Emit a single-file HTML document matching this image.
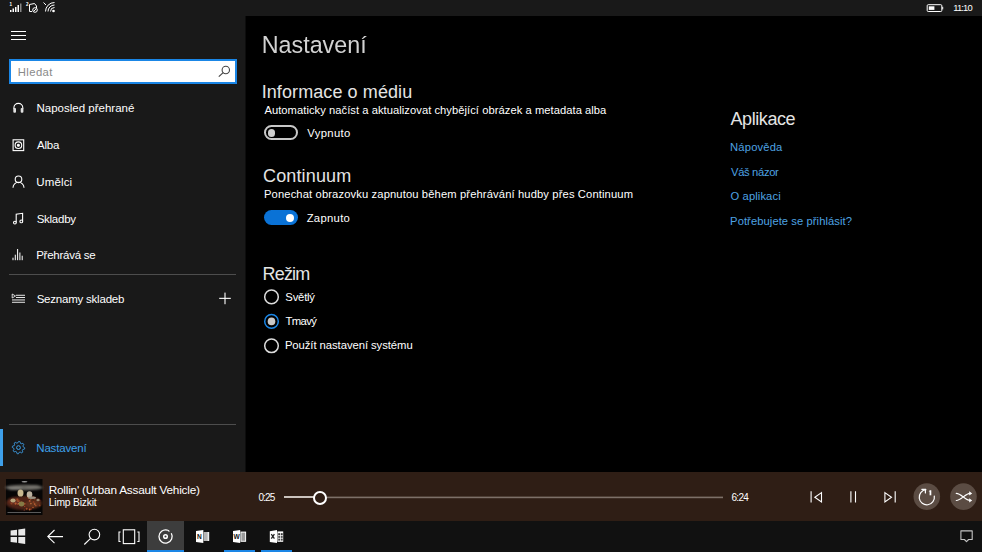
<!DOCTYPE html>
<html><head><meta charset="utf-8">
<style>
html,body{margin:0;padding:0;}
body{width:982px;height:552px;overflow:hidden;position:relative;background:#000;font-family:"Liberation Sans",sans-serif;}
.t{position:absolute;white-space:nowrap;line-height:1;}
.abs{position:absolute;}
svg{position:absolute;overflow:visible;}
</style></head><body>
<!-- status bar -->
<div class="abs" style="left:0;top:0;width:982px;height:16px;background:#191919"></div>
<!-- sidebar -->
<div class="abs" style="left:0;top:16px;width:245px;height:456px;background:#191919"></div>
<div class="abs" style="left:245px;top:16px;width:1px;height:456px;background:#0d0d0d"></div>
<!-- player bar -->
<div class="abs" style="left:0;top:472px;width:982px;height:49px;background:#2f1e15"></div>
<!-- taskbar -->
<div class="abs" style="left:0;top:521px;width:982px;height:31px;background:#111"></div>

<!-- status icons -->
<svg style="left:0;top:0" width="982" height="16" viewBox="0 0 982 16">
  <g fill="#fff">
    <rect x="10" y="10" width="1.5" height="2"/>
    <rect x="12.5" y="8.5" width="1.5" height="3.5"/>
    <rect x="15" y="7" width="1.5" height="5"/>
    <rect x="17.5" y="5" width="1.5" height="7"/>
    <rect x="20" y="3.5" width="1.5" height="8.5" fill="#888"/>
    <text x="9.5" y="5.5" font-size="4.5" font-family="Liberation Sans" font-weight="bold">1</text>
    <text x="26" y="5.5" font-size="4.5" font-family="Liberation Sans" font-weight="bold">2</text>
  </g>
  <g fill="none" stroke="#fff" stroke-width="1">
    <path d="M29.5 4.5 L34.5 3.5 L36.5 6 L36.5 8 M29.5 4.5 V11.5 H32"/>
    <circle cx="35" cy="10" r="2.3"/>
    <path d="M33.6 11.4 L36.4 8.6"/>
    <path d="M45.5 11.5 A9 9 0 0 1 54.5 2.5" />
    <path d="M48 11.5 A6.5 6.5 0 0 1 54.5 5" />
    <path d="M50.5 11.5 A4 4 0 0 1 54.5 7.5" />
  </g>
  <circle cx="53.5" cy="11" r="1.3" fill="#fff"/>
  <path d="M43.5 2.5 L46 5" stroke="#fff" stroke-width="1"/>
  <!-- battery -->
  <rect x="927.2" y="4.7" width="14.6" height="6.8" rx="1" fill="none" stroke="#fff" stroke-width="1"/>
  <rect x="942.2" y="6.8" width="1" height="2.6" fill="#fff"/>
  <rect x="928.8" y="6.3" width="5.6" height="3.6" fill="#fff"/>
</svg>

<!-- hamburger -->
<div class="abs" style="left:11px;top:30.6px;width:15px;height:1.2px;background:#fff"></div>
<div class="abs" style="left:11px;top:34.8px;width:15px;height:1.2px;background:#fff"></div>
<div class="abs" style="left:11px;top:39px;width:15px;height:1.2px;background:#fff"></div>

<!-- search box -->
<div class="abs" style="left:9px;top:59px;width:224px;height:21px;border:2px solid #1a86e6;background:#fff"></div>
<svg style="left:0;top:0" width="245" height="100">
  <circle cx="225.8" cy="70" r="3.7" fill="none" stroke="#444" stroke-width="1.1"/>
  <path d="M218.8 76.6 L223.2 72.6" stroke="#444" stroke-width="1.2"/>
</svg>

<!-- nav icons -->
<svg style="left:0;top:0" width="245" height="472">
  <g fill="none" stroke="#fff" stroke-width="1.1">
    <!-- headphones -->
    <path d="M13.9 109 V107.8 A4.45 4.45 0 0 1 22.8 107.8 V109"/>
    <rect x="13.3" y="107.9" width="2.7" height="4.9" rx="1" fill="#e0e0e0" stroke="none"/>
    <rect x="20.7" y="107.9" width="2.7" height="4.9" rx="1" fill="#e0e0e0" stroke="none"/>
    <!-- album -->
    <rect x="13.1" y="139.8" width="10.6" height="10.8"/>
    <circle cx="18.4" cy="145.2" r="3.3"/>
    <circle cx="18.4" cy="145.2" r="1" fill="#fff"/>
    <!-- person -->
    <circle cx="18.5" cy="179.3" r="3.3"/>
    <path d="M13 187.8 A5.5 5.5 0 0 1 24 187.8"/>
    <!-- note -->
    <path d="M16.2 222.4 V214.3 L22.6 213.3 V221.2"/>
    <circle cx="14.9" cy="222.6" r="1.4"/>
    <circle cx="21.3" cy="221.4" r="1.4"/>
    <!-- playlist -->
  </g>
  <g fill="#fff">
    <!-- now playing bars -->
    <rect x="12.5" y="257.7" width="1" height="2.5"/>
    <rect x="14.8" y="254.7" width="1" height="5.5"/>
    <rect x="17.1" y="249" width="1" height="11.2"/>
    <rect x="19.4" y="252.5" width="1" height="7.7"/>
    <rect x="21.7" y="255.7" width="1" height="4.5"/>
    <!-- playlist icon -->
    <path d="M12.2 294 L15.5 296 L12.2 298 Z" fill="none" stroke="#fff" stroke-width="0.8"/>
    <rect x="16" y="294.8" width="9" height="0.9"/>
    <rect x="16" y="297.1" width="9" height="0.9"/>
    <rect x="12" y="299.5" width="13" height="0.9"/>
    <rect x="12" y="301.8" width="13" height="0.9"/>
    <!-- plus -->
    <rect x="219.2" y="297.8" width="11.6" height="1.1"/>
    <rect x="224.45" y="292.6" width="1.1" height="11.6"/>
  </g>
  <!-- dividers -->
  <rect x="9" y="274" width="227" height="1" fill="#4d4d4d"/>
  <rect x="9" y="424" width="227" height="1" fill="#4d4d4d"/>
  <!-- accent -->
  <rect x="0" y="429" width="3" height="37" fill="#3ea0ea"/>
  <!-- gear -->
  <g transform="translate(18.5,447.6)" fill="none" stroke="#3ea0ea" stroke-width="1">
    <path d="M0.20 -6.20 L0.61 -6.17 L1.01 -6.12 L1.41 -6.04 L1.65 -5.44 L1.83 -4.86 L1.94 -4.28 L2.22 -4.15 L2.48 -3.99 L2.74 -3.82 L3.30 -4.02 L3.89 -4.15 L4.53 -4.24 L4.79 -3.93 L5.04 -3.61 L5.27 -3.27 L5.02 -2.68 L4.73 -2.14 L4.40 -1.66 L4.50 -1.36 L4.58 -1.07 L4.64 -0.77 L5.17 -0.51 L5.69 -0.19 L6.20 0.20 L6.17 0.61 L6.12 1.01 L6.04 1.41 L5.44 1.65 L4.86 1.83 L4.28 1.94 L4.15 2.22 L3.99 2.48 L3.82 2.74 L4.02 3.30 L4.15 3.89 L4.24 4.53 L3.93 4.79 L3.61 5.04 L3.27 5.27 L2.68 5.02 L2.14 4.73 L1.66 4.40 L1.36 4.50 L1.07 4.58 L0.77 4.64 L0.51 5.17 L0.19 5.69 L-0.20 6.20 L-0.61 6.17 L-1.01 6.12 L-1.41 6.04 L-1.65 5.44 L-1.83 4.86 L-1.94 4.28 L-2.22 4.15 L-2.48 3.99 L-2.74 3.82 L-3.30 4.02 L-3.89 4.15 L-4.53 4.24 L-4.79 3.93 L-5.04 3.61 L-5.27 3.27 L-5.02 2.68 L-4.73 2.14 L-4.40 1.66 L-4.50 1.36 L-4.58 1.07 L-4.64 0.77 L-5.17 0.51 L-5.69 0.19 L-6.20 -0.20 L-6.17 -0.61 L-6.12 -1.01 L-6.04 -1.41 L-5.44 -1.65 L-4.86 -1.83 L-4.28 -1.94 L-4.15 -2.22 L-3.99 -2.48 L-3.82 -2.74 L-4.02 -3.30 L-4.15 -3.89 L-4.24 -4.53 L-3.93 -4.79 L-3.61 -5.04 L-3.27 -5.27 L-2.68 -5.02 L-2.14 -4.73 L-1.66 -4.40 L-1.36 -4.50 L-1.07 -4.58 L-0.77 -4.64 L-0.51 -5.17 L-0.19 -5.69 Z"/>
    <circle r="1.9"/>
  </g>
</svg>

<!-- toggles -->
<div class="abs" style="left:264px;top:125px;width:30px;height:11px;border:2px solid #c8c8c8;border-radius:8px"></div>
<div class="abs" style="left:267.8px;top:129.1px;width:7.6px;height:7.6px;border-radius:50%;background:#cfcfcf"></div>
<div class="abs" style="left:264px;top:210px;width:34px;height:15px;border-radius:7.5px;background:#0a72d6"></div>
<div class="abs" style="left:286.1px;top:213.7px;width:8px;height:8px;border-radius:50%;background:#fff"></div>

<!-- radios -->
<svg style="left:0;top:0" width="400" height="400">
  <circle cx="271.5" cy="296.9" r="6.8" fill="none" stroke="#ddd" stroke-width="1.5"/>
  <circle cx="271.5" cy="321.4" r="6.8" fill="none" stroke="#1a86e6" stroke-width="1.5"/>
  <circle cx="271.5" cy="321.4" r="3.8" fill="#c8c8c8"/>
  <circle cx="271.5" cy="345.8" r="6.8" fill="none" stroke="#ddd" stroke-width="1.5"/>
</svg>

<!-- album art -->
<svg style="left:6.3px;top:478.6px" width="36.5" height="36" viewBox="0 0 36.5 36">
  <defs>
    <filter id="bl" x="-20%" y="-20%" width="140%" height="140%"><feGaussianBlur stdDeviation="0.9"/></filter>
    <filter id="bl2" x="-20%" y="-20%" width="140%" height="140%"><feGaussianBlur stdDeviation="0.45"/></filter>
  </defs>
  <rect width="36.5" height="36" fill="#070606"/>
  <g filter="url(#bl)">
    <ellipse cx="18" cy="8.5" rx="19" ry="2.8" fill="#686661"/>
    <ellipse cx="9" cy="9.2" rx="7" ry="1.8" fill="#807e78"/>
    <ellipse cx="27" cy="7.8" rx="7" ry="1.7" fill="#74726c"/>
    <ellipse cx="18" cy="24" rx="18" ry="7" fill="#4e2416"/>
    <ellipse cx="8" cy="22" rx="6" ry="3.5" fill="#6a3020"/>
    <ellipse cx="27" cy="25" rx="8" ry="3.5" fill="#62301c"/>
  </g>
  <g filter="url(#bl2)">
    <circle cx="9.6" cy="24.6" r="1.05" fill="#b85a30"/>
    <circle cx="17.2" cy="25.1" r="0.51" fill="#c06a3a"/>
    <circle cx="28.8" cy="20.6" r="0.62" fill="#8a3c20"/>
    <circle cx="24.9" cy="24.6" r="0.79" fill="#c06a3a"/>
    <circle cx="22.5" cy="19.1" r="1.02" fill="#8a3c20"/>
    <circle cx="18.7" cy="27.4" r="0.60" fill="#a04a26"/>
    <circle cx="27.0" cy="28.5" r="0.78" fill="#b85a30"/>
    <circle cx="25.0" cy="29.3" r="0.74" fill="#6a2a18"/>
    <circle cx="27.6" cy="23.2" r="1.03" fill="#8a3c20"/>
    <circle cx="16.0" cy="25.8" r="0.75" fill="#b85a30"/>
    <circle cx="28.7" cy="25.0" r="0.85" fill="#c06a3a"/>
    <circle cx="20.7" cy="29.7" r="1.01" fill="#a04a26"/>
    <circle cx="33.7" cy="26.4" r="0.92" fill="#8a3c20"/>
    <circle cx="12.4" cy="24.6" r="0.84" fill="#c06a3a"/>
    <circle cx="24.8" cy="20.0" r="0.66" fill="#c06a3a"/>
    <circle cx="6.0" cy="23.7" r="0.55" fill="#6a2a18"/>
    <circle cx="27.6" cy="22.7" r="0.51" fill="#8a3c20"/>
    <circle cx="15.7" cy="22.8" r="0.53" fill="#a04a26"/>
    <circle cx="21.7" cy="17.6" r="0.70" fill="#c06a3a"/>
    <circle cx="18.2" cy="31.0" r="0.50" fill="#b85a30"/>
    <circle cx="5.5" cy="24.5" r="1.08" fill="#8a3c20"/>
    <circle cx="11.3" cy="20.7" r="1.09" fill="#a04a26"/>
    <circle cx="12.9" cy="22.0" r="1.04" fill="#8a3c20"/>
    <circle cx="14.1" cy="23.4" r="0.73" fill="#c06a3a"/>
    <circle cx="29.7" cy="26.5" r="0.87" fill="#a04a26"/>
    <circle cx="32.1" cy="24.1" r="0.88" fill="#6a2a18"/>
    <circle cx="24.9" cy="30.1" r="1.09" fill="#6a2a18"/>
    <circle cx="18.7" cy="24.7" r="0.97" fill="#a04a26"/>
    <circle cx="33.6" cy="21.4" r="0.87" fill="#6a2a18"/>
    <circle cx="22.2" cy="17.8" r="0.78" fill="#b85a30"/>
    <circle cx="23.7" cy="21.9" r="0.94" fill="#b85a30"/>
    <circle cx="23.6" cy="30.5" r="0.88" fill="#b85a30"/>
    <circle cx="11.6" cy="25.4" r="0.72" fill="#8a3c20"/>
    <circle cx="12.0" cy="22.2" r="0.66" fill="#c06a3a"/>
    <circle cx="27.2" cy="18.5" r="1.08" fill="#a04a26"/>
    <ellipse cx="14.5" cy="14" rx="3" ry="3.6" fill="#c8b890"/>
    <ellipse cx="23.5" cy="15.5" rx="2.8" ry="3.2" fill="#bcb2a0"/>
    <ellipse cx="26" cy="18.8" rx="4" ry="1.2" fill="#9a9282"/>
    <ellipse cx="7" cy="21.5" rx="2.6" ry="2" fill="#b8a67c"/>
    <ellipse cx="15.5" cy="25" rx="2.8" ry="2.4" fill="#857a44"/>
    <ellipse cx="32" cy="21" rx="1.6" ry="1.2" fill="#9a8a70"/>
    <ellipse cx="18.5" cy="2.8" rx="3" ry="0.8" fill="#9a9a9a"/>
  </g>
  <rect x="1.5" y="33" width="33.5" height="1" fill="#5a5a5a"/>
</svg>

<!-- slider -->
<div class="abs" style="left:284px;top:496.4px;width:30px;height:2px;background:#cbc3bd"></div>
<svg style="left:0;top:0" width="982" height="552"><rect x="326" y="496.6" width="397" height="1.6" fill="#7d7068"/></svg>
<div class="abs" style="left:312.9px;top:490.5px;width:10px;height:10px;border:2px solid #fff;border-radius:50%;background:#2f1e15"></div>

<!-- player controls -->
<svg style="left:0;top:0" width="982" height="552">
  <g fill="none" stroke="#fff" stroke-width="1.1">
    <path d="M811.1 491.3 V502.4"/>
    <path d="M821.5 492.6 L814.8 497.3 L821.5 502 Z"/>
    <path d="M850.9 491.3 V502.4 M855.5 491.3 V502.4"/>
    <path d="M884.9 492.6 L891.5 497.3 L884.9 502 Z"/>
    <path d="M895.2 491.3 V502.4"/>
  </g>
  <circle cx="926.8" cy="496.6" r="13.3" fill="#5b4c43"/>
  <circle cx="963.5" cy="496.6" r="13.3" fill="#5b4c43"/>
  <g fill="none" stroke="#fff" stroke-width="1.2" stroke-linecap="round">
    <path d="M925.9 489.7 A7.6 7.6 0 1 0 934.3 496"/>
    <path d="M921.8 489.3 H925.4 V492.9"/>
    <path d="M956.3 493.4 C961 493.4 965.5 500.4 970 500.4 M956.3 500.5 C961 500.5 965.5 493.4 970 493.4"/>
  </g>
  <path d="M969.2 491.3 L972.2 493.4 L969.2 495.5 Z M969.2 498.3 L972.2 500.4 L969.2 502.5 Z" fill="#fff"/>
  <rect x="929.6" y="490.3" width="1.7" height="5" fill="#fff"/>
  <path d="M928.6 491.4 L930.2 490.2 L930.6 491.6 Z" fill="#fff"/>
</svg>

<!-- taskbar icons -->
<div class="abs" style="left:147.3px;top:521px;width:37px;height:31px;background:#3d3d3d"></div>
<div class="abs" style="left:147.3px;top:550px;width:37px;height:2px;background:#1a86e6"></div>
<div class="abs" style="left:224px;top:550px;width:31px;height:2px;background:#1a86e6"></div>
<div class="abs" style="left:261px;top:550px;width:30.5px;height:2px;background:#1a86e6"></div>
<svg style="left:0;top:0" width="982" height="552">
  <!-- windows logo -->
  <g fill="#e8e8e8">
    <path d="M10.6 530.6 L17 529.7 V535.6 H10.6 Z"/>
    <path d="M18.3 529.5 L25.2 528.6 V535.6 H18.3 Z"/>
    <path d="M10.6 536.9 H17 V542.8 L10.6 541.9 Z"/>
    <path d="M18.3 536.9 H25.2 V543.9 L18.3 543 Z"/>
  </g>
  <g fill="none" stroke="#fff" stroke-width="1.1">
    <path d="M63 536.6 H48 M54.5 530 L47.8 536.6 L54.5 543.2"/>
    <circle cx="94.4" cy="534.6" r="5.3"/>
    <path d="M90.6 538.4 L84.3 544.5"/>
    <rect x="123.3" y="529.8" width="11.4" height="13.8"/>
    <path d="M120.6 532 H119 V541.5 H120.6 M137.4 532 H139 V541.5 H137.4"/>
    <path d="M171.3 533.2 A6.6 6.6 0 1 1 167.3 530.1" stroke-width="1.3"/>
    <path d="M167.3 530.1 Q169 530.6 169.3 531.6" stroke-width="1.1"/>
    <circle cx="165.5" cy="536.5" r="1.8" stroke-width="1.5"/>
  </g>
  <!-- office icons -->
  <g>
    <rect x="203.6" y="532" width="5.4" height="9" fill="#b5b5b5"/>
    <path d="M207.6 532 H209.2 V541 H207.6 Z" fill="#eee"/>
    <path d="M196 531.1 L203.3 530 V543 L196 541.9 Z" fill="#fff"/>
    <text x="197" y="538.9" font-size="6.6" font-weight="bold" font-family="Liberation Sans" fill="#111">N</text>

    <rect x="240.5" y="531.6" width="5.6" height="10.2" fill="#fff"/>
    <rect x="241.4" y="532.6" width="3.8" height="8.2" fill="#9a9a9a"/>
    <path d="M233 531.1 L240.2 530 V543 L233 541.9 Z" fill="#fff"/>
    <text x="233.5" y="539" font-size="6.6" font-weight="bold" font-family="Liberation Sans" fill="#111">W</text>

    <rect x="277.4" y="531.4" width="5.8" height="10.4" fill="#fff"/>
    <rect x="278.2" y="533.2" width="1.9" height="2" fill="#333"/><rect x="280.8" y="533.2" width="1.9" height="2" fill="#333"/>
    <rect x="278.2" y="535.9" width="1.9" height="2" fill="#555"/><rect x="280.8" y="535.9" width="1.9" height="2" fill="#555"/>
    <rect x="278.2" y="538.6" width="1.9" height="2" fill="#444"/><rect x="280.8" y="538.6" width="1.9" height="2" fill="#444"/>
    <path d="M269.8 531.2 L277 530 V543 L269.8 541.9 Z" fill="#fff"/>
    <path d="M271.3 534.2 L274.4 538.6 M274.4 534.2 L271.3 538.6" stroke="#222" stroke-width="1.3"/>
  </g>
  <!-- notification -->
  <path d="M960.9 530.9 H972.2 V539.5 H968.6 L966.5 541.7 L964.4 539.5 H960.9 Z" fill="none" stroke="#c4c4c4" stroke-width="1.1" stroke-linejoin="round"/>
</svg>

<div class="t" style="left:36.48px;top:103px;font-size:11.5px;letter-spacing:0.007px;color:#fff;">Naposled přehrané</div>
<div class="t" style="left:37.00px;top:140px;font-size:11.5px;letter-spacing:-0.220px;color:#fff;">Alba</div>
<div class="t" style="left:36.30px;top:177px;font-size:11.5px;letter-spacing:0.136px;color:#fff;">Umělci</div>
<div class="t" style="left:36.64px;top:214px;font-size:11.5px;letter-spacing:-0.242px;color:#fff;">Skladby</div>
<div class="t" style="left:36.18px;top:250px;font-size:11.5px;letter-spacing:-0.257px;color:#fff;">Přehrává se</div>
<div class="t" style="left:36.64px;top:294px;font-size:11.5px;letter-spacing:-0.214px;color:#fff;">Seznamy skladeb</div>
<div class="t" style="left:36.28px;top:443px;font-size:11.5px;letter-spacing:-0.173px;color:#3ea0ea;">Nastavení</div>
<div class="t" style="left:17.70px;top:67px;font-size:11.3px;letter-spacing:0.423px;color:#8a8a8a;">Hledat</div>
<div class="t" style="left:261.73px;top:34px;font-size:23.32px;color:#d2d2d2;transform:scaleY(1.0540);transform-origin:0 19px;">Nastavení</div>
<div class="t" style="left:261.68px;top:83px;font-size:18px;letter-spacing:0.090px;color:#e4e4e4;">Informace o médiu</div>
<div class="t" style="left:264.40px;top:105px;font-size:11.2px;letter-spacing:0.046px;color:#fff;">Automaticky načíst a aktualizovat chybějící obrázek a metadata alba</div>
<div class="t" style="left:307.30px;top:128px;font-size:11.3px;letter-spacing:0.327px;color:#fff;">Vypnuto</div>
<div class="t" style="left:263.00px;top:167px;font-size:18px;letter-spacing:0.148px;color:#e4e4e4;">Continuum</div>
<div class="t" style="left:264.00px;top:189px;font-size:11.2px;letter-spacing:0.129px;color:#fff;">Ponechat obrazovku zapnutou během přehrávání hudby přes Continuum</div>
<div class="t" style="left:306.66px;top:213px;font-size:11.3px;letter-spacing:0.297px;color:#fff;">Zapnuto</div>
<div class="t" style="left:262.46px;top:265px;font-size:18px;letter-spacing:-0.782px;color:#e4e4e4;">Režim</div>
<div class="t" style="left:285.35px;top:292px;font-size:11.3px;letter-spacing:-0.224px;color:#fff;">Světlý</div>
<div class="t" style="left:285.57px;top:316px;font-size:11.3px;letter-spacing:-0.643px;color:#fff;">Tmavý</div>
<div class="t" style="left:284.90px;top:340px;font-size:11.3px;letter-spacing:-0.067px;color:#fff;">Použít nastavení systému</div>
<div class="t" style="left:730.50px;top:110px;font-size:18px;letter-spacing:-0.426px;color:#e4e4e4;">Aplikace</div>
<div class="t" style="left:730.10px;top:142px;font-size:11.2px;letter-spacing:0.170px;color:#4ea3e3;">Nápověda</div>
<div class="t" style="left:731.00px;top:167px;font-size:11.2px;letter-spacing:-0.323px;color:#4ea3e3;">Váš názor</div>
<div class="t" style="left:730.55px;top:191px;font-size:11.2px;letter-spacing:0.108px;color:#4ea3e3;">O aplikaci</div>
<div class="t" style="left:730.10px;top:216px;font-size:11.2px;letter-spacing:0.077px;color:#4ea3e3;">Potřebujete se přihlásit?</div>
<div class="t" style="left:48.66px;top:485px;font-size:11.8px;letter-spacing:-0.212px;color:#fff;">Rollin' (Urban Assault Vehicle)</div>
<div class="t" style="left:48.78px;top:498px;font-size:10.3px;letter-spacing:-0.189px;color:#fff;">Limp Bizkit</div>
<div class="t" style="left:258.40px;top:493px;font-size:10px;letter-spacing:-0.867px;color:#fff;">0:25</div>
<div class="t" style="left:731.50px;top:493px;font-size:10px;letter-spacing:-0.700px;color:#fff;">6:24</div>
<div class="t" style="left:953.24px;top:3px;font-size:9.4px;letter-spacing:-0.832px;color:#fff;">11:10</div>
</body></html>
